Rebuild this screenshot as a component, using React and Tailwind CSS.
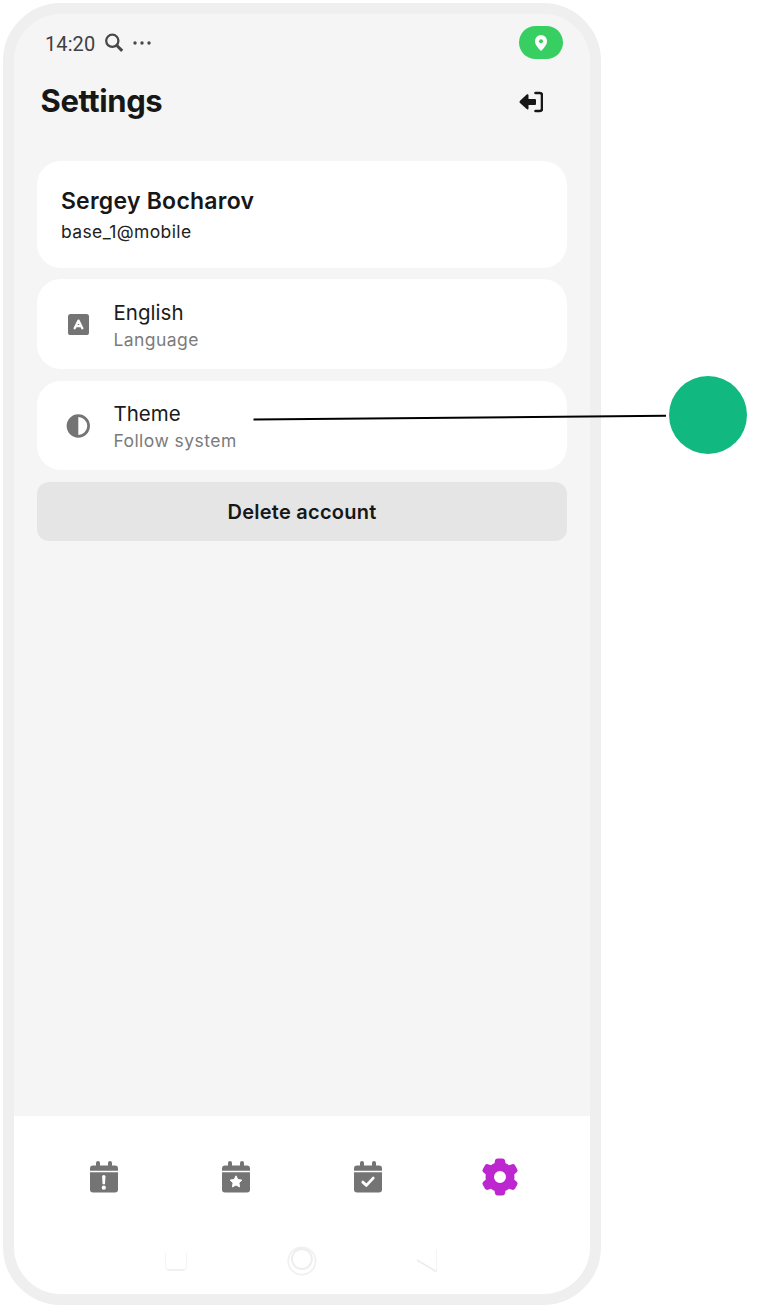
const navItems = [
  { label: "Urgent", mark: "alert" },
  { label: "Starred", mark: "star" },
  { label: "Completed", mark: "check" },
];

function SearchIcon() {
  return (
    <svg className="ml-[9px] size-5" viewBox="0 0 20 20" fill="none" stroke="#484848">
      <circle cx="8.3" cy="7.8" r="6.1" strokeWidth="2.3" />
      <path d="M12.6 12.3L18.2 17.9" strokeWidth="3" />
    </svg>
  );
}

function LogoutIcon() {
  return (
    <svg className="mt-px h-[22px] w-6" viewBox="0 0 24 22">
      <path d="M1 9.8L7.7 3.5C8.5 2.8 9.5 3.2 9.5 4.2V8H15.7C16.5 8 17 8.5 17 9.2V12.8C17 13.6 16.500 14 15.700 14H9.500V17.4C9.500 18.400 8.500 18.800 7.700 18.100L1 12.100C.4 11.500.4 10.400 1 9.800Z" fill="#171717" />
      <path d="M16.500 2H20.800Q23 2 23 4.200V17.800Q23 20 20.800 20H16.500" fill="none" stroke="#171717" strokeWidth="2.6" strokeLinecap="round" />
    </svg>
  );
}

function LanguageIcon() {
  return (
    <svg className="size-[21px]" viewBox="0 0 21 21">
      <rect width="21" height="21" rx="2.6" fill="#747474" />
      <path d="M6.7 14.2L10.5 6.6L14.3 14.2M8 12.2H13" fill="none" stroke="white" strokeWidth="2.3" strokeLinecap="round" strokeLinejoin="round" />
    </svg>
  );
}

function ThemeIcon() {
  return (
    <svg className="size-6" viewBox="0 0 24 24">
      <circle cx="12.3" cy="12" r="10.3" fill="white" stroke="#747474" strokeWidth="2.7" />
      <path d="M12.3 1A11 11 0 0 0 12.3 23Z" fill="#747474" />
    </svg>
  );
}

function CalendarIcon({ mark }) {
  return (
    <svg className="h-8 w-7" viewBox="0 0 28 32">
      <path d="M0 9.7V7.5Q0 4.5 3 4.5H6V2A2 2 0 0 1 10 2V4.5H18V2A2 2 0 0 1 22 2V4.5H25Q28 4.5 28 7.5V9.7Z" fill="#747474" />
      <path d="M0 11.2H28V28.5Q28 31.5 25 31.5H3Q0 31.5 0 28.5Z" fill="#747474" />
      {mark === "alert" && (
        <g fill="white">
          <path d="M12.1 15.6A1.7 1.7 0 0 1 15.5 15.6L15 23.2H12.6Z" />
          <circle cx="13.8" cy="26.7" r="2.1" />
        </g>
      )}
      {mark === "star" && (
        <path d="M14 14.8L15.8 18.5L19.8 19.1L16.9 21.9L17.6 25.9L14 24L10.4 25.9L11.1 21.9L8.2 19.1L12.2 18.5Z" fill="white" stroke="white" strokeLinejoin="round" />
      )}
      {mark === "check" && (
        <path d="M8.8 21.1L12.4 24.4L19.2 17.1" fill="none" stroke="white" strokeWidth="2.8" strokeLinecap="round" strokeLinejoin="round" />
      )}
    </svg>
  );
}

function GearIcon() {
  return (
    <svg className="h-[38px] w-9" viewBox="0 0 36 38">
      <path
        d="M15.5 .5H20.5Q22.6.5 23 2.4L23.5 5.3Q25.4 6 27 7.3L30 6.2Q32 5.7 33 7.2L35.2 11.3Q36 13 34.7 14.2L32.2 16.5Q32.7 19 32.2 21.5L34.7 23.8Q36 25 35.2 26.7L33 30.8Q32 32.3 30 31.8L27 30.7Q25.4 32 23.5 32.7L23 35.6Q22.6 37.5 20.5 37.5H15.5Q13.4 37.5 13 35.6L12.5 32.7Q10.6 32 9 30.7L6 31.8Q4 32.3 3 30.8L.8 26.7Q0 25 1.3 23.8L3.8 21.5Q3.3 19 3.8 16.5L1.3 14.2Q0 13 .8 11.3L3 7.2Q4 5.7 6 6.2L9 7.3Q10.6 6 12.5 5.3L13 2.4Q13.4.5 15.5.5ZM18 13A6 6 0 1 0 18 25A6 6 0 1 0 18 13Z"
        fill="#bd27cf"
        fillRule="evenodd"
      />
    </svg>
  );
}

function SettingRow({ icon, title, detail }) {
  return (
    <div className="flex h-[89.5px] items-center rounded-[24px] bg-white pl-7">
      <div className="flex w-[26px] justify-center pt-px">{icon}</div>
      <div className="ml-[22px] pt-[3px]">
        <p className="text-[20.5px] leading-[27px] tracking-[0.05px] text-[#1b1b1b]">{title}</p>
        <p className="text-[17.5px] leading-[27px] tracking-[0.45px] text-[#7b7b7b]">{detail}</p>
      </div>
    </div>
  );
}

function SystemButtons() {
  return (
    <div className="mt-[49px] flex justify-center pr-0.5">
      <svg className="h-8 w-[290px]" viewBox="0 0 290 32" fill="none" stroke="#ededed">
        <path d="M9.5 8V22Q9.5 25 12.5 25H27.5Q30.5 25 30.5 22V8" stroke="#f5f5f5" />
        <path d="M11.5 25H28.5" strokeWidth="1.6" />
        <circle cx="145.9" cy="16" r="13.7" stroke="#f1f1f1" strokeWidth="1.8" />
        <circle cx="145.9" cy="14" r="10" strokeWidth="1.8" />
        <path d="M261 15L280 26.5" strokeWidth="1.8" />
        <path d="M280.5 5V27" stroke="#f4f4f4" />
      </svg>
    </div>
  );
}

export default function App() {
  return (
    <div className="relative h-[1308px] w-[771px] overflow-hidden bg-white pl-[3px] pt-[3px] font-['Inter',sans-serif]">
      <div className="flex h-[1302px] w-[598px] flex-col overflow-hidden rounded-[58px] border-[11px] border-[#efefef] bg-[#f5f5f5]">
        {/* Status bar */}
        <div className="mt-3 flex h-[33px] items-center pl-[31px] pr-[27px]">
          <span className="pt-0.5 font-['Roboto',sans-serif] text-[20px] tracking-[0.1px] text-[#404040]">14:20</span>
          <SearchIcon />
          <svg className="ml-[9px] h-1 w-[18px]" viewBox="0 0 18 4" fill="#484848">
            <circle cx="2" cy="2" r="1.7" />
            <circle cx="9" cy="2" r="1.7" />
            <circle cx="16" cy="2" r="1.7" />
          </svg>
          <div className="ml-auto flex h-[33px] w-11 items-center justify-center rounded-full bg-[#37cf62]">
            <svg className="h-4 w-3" viewBox="0 0 12 16">
              <path d="M6 0A6 6 0 0 0 0 6C0 10 3.5 13.5 6 16C8.5 13.5 12 10 12 6A6 6 0 0 0 6 0Z" fill="white" />
              <circle cx="6" cy="6.2" r="2" fill="#37cf62" />
            </svg>
          </div>
        </div>

        <header className="mt-[19px] flex h-[46px] items-center justify-between pl-[26.5px] pr-[47px]">
          <h1 className="text-[31px] leading-[46px] font-bold tracking-[-0.4px] text-[#171717]">Settings</h1>
          <LogoutIcon />
        </header>

        {/* Account and preferences */}
        <main className="mx-[23.4px] mt-[37.4px] flex flex-col gap-[11.6px]">
          <section className="h-[106.5px] rounded-[24px] bg-white px-[23.5px] pt-[23.5px]">
            <h2 className="text-[23px] leading-[32px] font-semibold tracking-[0.25px] text-[#171717]">Sergey Bocharov</h2>
            <p className="text-[17.5px] leading-[29px] tracking-[0.4px] text-[#222]">base_1@mobile</p>
          </section>
          <SettingRow icon={<LanguageIcon />} title="English" detail="Language" />
          <SettingRow icon={<ThemeIcon />} title="Theme" detail="Follow system" />
          <button className="h-[59px] rounded-[12px] bg-[#e5e5e5] pt-px text-[20px] font-semibold tracking-[0.25px] text-[#171717]">Delete account</button>
        </main>

        <footer className="mt-auto h-[178px] bg-white pt-[42px]">
          <nav className="mx-[23.5px] grid h-[38px] grid-cols-4 place-items-center">
            {navItems.map((item) => (
              <button key={item.mark} aria-label={item.label}>
                <CalendarIcon mark={item.mark} />
              </button>
            ))}
            <button aria-label="Settings" className="-mt-px">
              <GearIcon />
            </button>
          </nav>
          <SystemButtons />
        </footer>
      </div>

      {/* Theme callout */}
      <svg className="absolute left-[250px] top-[370px] h-[90px] w-[500px]" viewBox="0 0 500 90">
        <path d="M3.5 49.5L416 45.7" stroke="black" strokeWidth="2" />
        <circle cx="458" cy="45" r="39" fill="#11b981" />
      </svg>
    </div>
  );
}
